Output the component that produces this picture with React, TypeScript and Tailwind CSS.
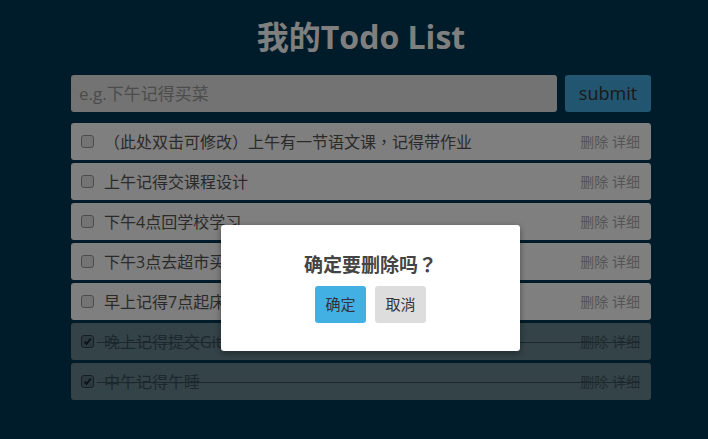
import React from "react";

type Todo = { text: string; done: boolean };

const todos: Todo[] = [
  { text: "（此处双击可修改）上午有一节语文课，记得带作业", done: false },
  { text: "上午记得交课程设计", done: false },
  { text: "下午4点回学校学习", done: false },
  { text: "下午3点去超市买菜", done: false },
  { text: "早上记得7点起床", done: false },
  { text: "晚上记得提交Github", done: true },
  { text: "中午记得午睡", done: true },
];

const font = { fontFamily: '"Open Sans", "Noto Sans CJK TC", sans-serif' };

function Checkbox({ checked }: { checked: boolean }) {
  return (
    <span
      className={`flex h-[13px] w-[13px] shrink-0 items-center justify-center rounded-[3px] border ${
        checked ? "border-[#2e3f47] bg-[#58737e]" : "border-[#999] bg-[#e8e8e8]"
      }`}
    >
      {checked && (
        <svg width="9" height="9" viewBox="0 0 10 10">
          <path d="M1.5 5.2 L4 7.6 L8.6 1.8" fill="none" stroke="#1d282e" strokeWidth="2.2" />
        </svg>
      )}
    </span>
  );
}

function TodoItem({ todo }: { todo: Todo }) {
  return (
    <li
      className={`relative flex h-[37px] items-center rounded-[3px] pl-[10px] pr-[11px] ${
        todo.done ? "bg-[#678690]" : "bg-white"
      }`}
    >
      <Checkbox checked={todo.done} />
      <span className={`ml-[10px] flex-1 text-[16px] ${todo.done ? "text-[#3a505a]" : "text-[#555]"}`}>
        {todo.text}
      </span>
      <span className={`text-[14px] ${todo.done ? "text-[#3e535d]" : "text-[#aaa]"}`}>删除 详细</span>
      {todo.done && <span className="absolute left-[26px] right-[11px] top-[19px] h-px bg-[#3a505a]" />}
    </li>
  );
}

export default function App() {
  return (
    <div className="relative h-[439px] w-full overflow-hidden bg-[#003652]" style={font}>
      <div className="ml-[71px] w-[580px] pt-[14px]">
        <h1 className="text-center text-[32px] font-bold leading-[46px] text-white">我的Todo List</h1>
        <div className="mt-[15px] flex gap-[8px]">
          <input
            className="h-[37px] flex-1 rounded-[3px] bg-[#e6e6e6] px-[8px] text-[17px] text-[#555] placeholder:text-[#999] outline-none"
            placeholder="e.g.下午记得买菜"
            style={font}
          />
          <button className="h-[37px] w-[86px] rounded-[3px] bg-[#43abe0] text-[18px] text-[#333]">submit</button>
        </div>
        <ul className="mt-[11px] flex flex-col gap-[3px]">
          {todos.map((t, i) => (
            <TodoItem key={i} todo={t} />
          ))}
        </ul>
      </div>

      {/* overlay */}
      <div className="absolute inset-0 bg-black/50" />

      {/* confirm dialog */}
      <div className="absolute left-[221px] top-[225px] flex h-[126px] w-[299px] flex-col items-center rounded-[3px] bg-white pt-[26px] shadow-[0_2px_6px_rgba(0,0,0,0.4)]">
        <div className="text-[19px] font-bold leading-[28px] text-[#444]">确定要删除吗？</div>
        <div className="mt-[7px] flex gap-[9px]">
          <button className="h-[37px] w-[51px] rounded-[3px] bg-[#42b0e3] text-[15px] text-[#333]">确定</button>
          <button className="h-[37px] w-[51px] rounded-[3px] bg-[#dddddd] text-[15px] text-[#333]">取消</button>
        </div>
      </div>
    </div>
  );
}
